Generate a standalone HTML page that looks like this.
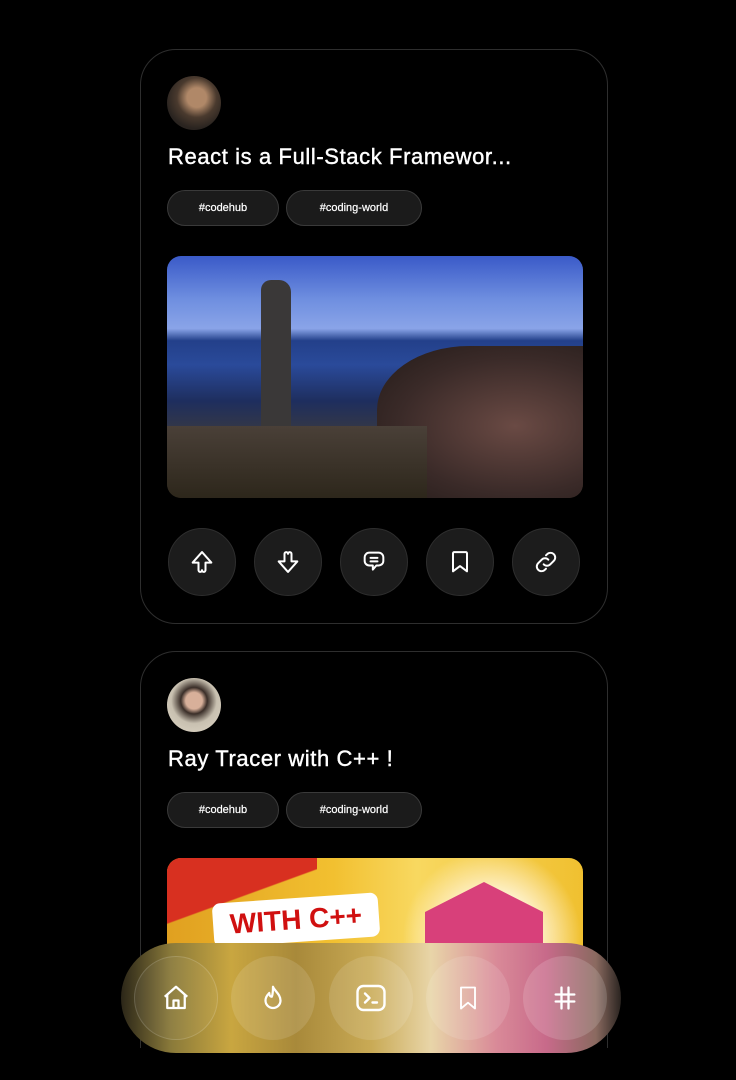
<!DOCTYPE html>
<html style="width:736px;height:1080px;overflow:hidden"><head><style>
*{margin:0;padding:0;box-sizing:border-box}
body{width:736px;height:1080px;background:#000;overflow:hidden;position:relative;font-family:"Liberation Sans",sans-serif;color:#fff}
.card{position:absolute;left:140px;width:468px;border:1px solid #2e2e2e;border-radius:36px;background:#000;overflow:hidden}
.av{position:absolute;left:26px;width:54px;height:54px;border-radius:50%}
.title{position:absolute;left:27px;font-size:22px;font-weight:normal;letter-spacing:0.6px;-webkit-text-stroke:0.4px #fff}
.tag{position:absolute;height:36px;border:1px solid #3a3a3a;background:#1b1b1b;border-radius:18px;font-size:11px;display:flex;align-items:center;justify-content:center;-webkit-text-stroke:0.2px #fff}
.img{position:absolute;left:26px;width:416px;border-radius:14px;overflow:hidden}
.btn{position:absolute;top:478px;width:68px;height:68px;border-radius:50%;background:#1c1c1c;border:1px solid #2e2e2e;display:flex;align-items:center;justify-content:center}
.nav{position:absolute;left:121px;top:943px;width:500px;height:110px;border-radius:55px;overflow:hidden;
background:linear-gradient(90deg,#2b2618 0%,#8a7a3a 10%,#c9a640 22%,#a8893a 35%,#c9aa55 50%,#e8d5a8 62%,#d98a98 75%,#c86a8a 85%,#8a6a60 95%,#2a2420 100%)}
.nc{position:absolute;top:13px;width:84px;height:84px;border-radius:50%;background:rgba(255,255,255,0.12);display:flex;align-items:center;justify-content:center}
</style></head><body>

<div class="card" style="top:49px;height:575px">
  <div class="av" style="top:26px;background:radial-gradient(circle at 55% 40%,#b08868 0 22%,#4a3a2e 45%,#2a2420 70%),#333"></div>
  <div class="title" style="top:94px">React is a Full-Stack Framewor...</div>
  <div class="tag" style="top:140px;left:26px;width:112px">#codehub</div>
  <div class="tag" style="top:140px;left:145px;width:136px">#coding-world</div>
  <div class="img" style="top:206px;height:242px;background:linear-gradient(180deg,#3a5ac8 0%,#6f8fe0 18%,#8aa4e8 30%,#23408a 35%,#2a4a9a 45%,#1e2e5e 60%,#3a3a40 75%,#2a2418 100%)">
    <div style="position:absolute;left:94px;top:24px;width:30px;height:150px;background:#3a3838;border-radius:10px 12px 2px 2px"></div>
    <div style="position:absolute;left:210px;top:90px;width:230px;height:160px;background:radial-gradient(ellipse at 60% 50%,#6a4a44,#3a2a28 60%,#221a18);border-radius:40% 0 0 0"></div>
    <div style="position:absolute;left:0;top:170px;width:260px;height:80px;background:linear-gradient(180deg,#4a4038,#2a2418)"></div>
  </div>
  <div class="btn" style="left:27px"><svg width="28" height="28" viewBox="0 0 24 24" fill="none" stroke="#fff" stroke-width="1.7" stroke-linejoin="round" stroke-linecap="round"><path d="M12 3.5L4 12.5h5v6.5a1.5 1.5 0 003 0 1.5 1.5 0 003 0v-6.5h5z"/></svg></div>
  <div class="btn" style="left:113px"><svg width="28" height="28" viewBox="0 0 24 24" fill="none" stroke="#fff" stroke-width="1.7" stroke-linejoin="round" stroke-linecap="round"><path d="M12 20.5L4 11.5h5V5a1.5 1.5 0 013 0 1.5 1.5 0 013 0v6.5h5z"/></svg></div>
  <div class="btn" style="left:199px"><svg width="28" height="28" viewBox="0 0 24 24" fill="none" stroke="#fff" stroke-width="1.7" stroke-linecap="round" stroke-linejoin="round"><path d="M8 4h8a4 4 0 014 4v3a4 4 0 01-4 4h-2l-3 3.5V15H8a4 4 0 01-4-4V8a4 4 0 014-4z"/><path d="M9 8.5h6M9 11.5h6"/></svg></div>
  <div class="btn" style="left:285px"><svg width="28" height="28" viewBox="0 0 24 24" fill="none" stroke="#fff" stroke-width="1.7" stroke-linejoin="round"><path d="M7 3.5h10a1 1 0 011 1V20l-6-4.5L6 20V4.5a1 1 0 011-1z"/></svg></div>
  <div class="btn" style="left:371px"><svg width="28" height="28" viewBox="0 0 24 24" fill="none" stroke="#fff" stroke-width="1.7" stroke-linecap="round"><path d="M10 14a4 4 0 005.7 0l3-3a4 4 0 00-5.7-5.7l-1 1"/><path d="M14 10a4 4 0 00-5.7 0l-3 3a4 4 0 005.7 5.7l1-1"/></svg></div>
</div>

<div class="card" style="top:651px;height:480px">
  <div class="av" style="top:26px;background:radial-gradient(circle at 50% 42%,#d8b09a 0 20%,#3a2e28 32%,#c8c0b0 55%,#e0d8c8)"></div>
  <div class="title" style="top:94px">Ray Tracer with C++ !</div>
  <div class="tag" style="top:140px;left:26px;width:112px">#codehub</div>
  <div class="tag" style="top:140px;left:145px;width:136px">#coding-world</div>
  <div class="img" style="top:206px;height:260px;background:linear-gradient(90deg,#e0a020,#f2c030 40%,#f8d860 60%,#f0c030)">
    <div style="position:absolute;left:0;top:0;width:150px;height:90px;background:linear-gradient(160deg,#d83020 0 45%,transparent 46%)"></div>
    <div style="position:absolute;left:46px;top:40px;width:166px;height:44px;background:#fff;border-radius:8px;transform:rotate(-4deg);color:#d01010;font-weight:900;font-size:28px;display:flex;align-items:center;justify-content:center">WITH C++</div>
    <div style="position:absolute;left:235px;top:-10px;width:180px;height:180px;border-radius:50%;background:radial-gradient(circle,#fff8e0 30%,rgba(255,240,200,0.6) 50%,transparent 70%)"></div>
    <div style="position:absolute;left:258px;top:24px;width:118px;height:120px;background:#d8407a;clip-path:polygon(50% 0,100% 25%,100% 75%,50% 100%,0 75%,0 25%)"></div>
  </div>
</div>
<div style="position:absolute;left:0;top:1048px;width:736px;height:40px;background:#000"></div>

<div class="nav">
  <div class="nc" style="left:13px;background:rgba(255,255,255,0.05);border:1px solid rgba(255,255,255,0.15)"><svg width="30" height="30" viewBox="0 0 24 24" fill="none" stroke="#fff" stroke-width="1.8" stroke-linejoin="round"><path d="M3 11l9-8 9 8M5 9.5V20h14V9.5"/><path d="M10 20v-6h4v6"/></svg></div>
  <div class="nc" style="left:110px"><svg width="30" height="30" viewBox="0 0 24 24" fill="none" stroke="#fff" stroke-width="1.8" stroke-linejoin="round"><path d="M12 3c1 3 6 6 6 11a6 6 0 01-12 0c0-3 2-5 3-6 0 2 1 3 2 3 1-2 1-5 1-8z"/></svg></div>
  <div class="nc" style="left:208px"><svg width="36" height="36" viewBox="0 0 24 24" fill="none" stroke="#fff" stroke-width="1.6" stroke-linecap="round" stroke-linejoin="round"><rect x="3" y="4" width="18" height="16" rx="4"/><path d="M8 9l3 3-3 3M13 15h3"/></svg></div>
  <div class="nc" style="left:305px"><svg width="28" height="28" viewBox="0 0 24 24" fill="none" stroke="#fff" stroke-width="1.6" stroke-linejoin="round"><path d="M6 3h12v18l-6-5-6 5z"/></svg></div>
  <div class="nc" style="left:402px;background:rgba(255,255,255,0.15)"><svg width="28" height="28" viewBox="0 0 24 24" fill="none" stroke="#fff" stroke-width="2" stroke-linecap="round"><path d="M9 3v18M15 3v18M4 9h16M4 15h16"/></svg></div>
</div>
</body></html>
